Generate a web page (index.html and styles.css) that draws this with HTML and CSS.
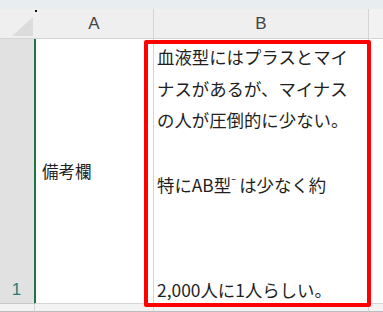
FILE: index.html
```html
<!DOCTYPE html>
<html lang="ja">
<head>
  <meta charset="UTF-8" />
  <title>備考欄</title>
  <link rel="stylesheet" href="styles.css">
</head>
<body>
  <div class="window">
    <div class="topbar"></div>

    <div class="sheet">
      <!-- header row -->
      <div class="corner"><span class="tri"></span><span class="dot"></span></div>
      <div class="col-head">A</div>
      <div class="col-head">B</div>
      <div class="col-head edge"></div>

      <!-- row 1 -->
      <div class="row-head">1</div>
      <div class="cell cell-a">備考欄</div>
      <div class="cell cell-b">
        <div class="line">血液型にはプラスとマイ</div>
        <div class="line">ナスがあるが、マイナス</div>
        <div class="line">の人が圧倒的に少ない。</div>
        <div class="line">&nbsp;</div>
        <div class="line">特にAB型<span class="minus">⁻</span>は少なく約</div>
        <div class="line last">2,000人に1人らしい。</div>
      </div>
      <div class="cell edge"></div>

      <!-- bottom strip -->
      <div class="foot"></div>
      <div class="foot"></div>
      <div class="foot"></div>
      <div class="foot edge"></div>
    </div>

    <div class="highlight"></div>
  </div>
</body>
</html>
```

FILE: styles.css
```css
:root {
  --head-bg: #efefef;
  --row-sel: #e1e1e1;
  --grid: #d4d4d4;
  --green: #217346;
  --red: #ff0000;
  --text: #1f1f1f;
}

body {
  margin: 0;
  background: #fff;
  font-family: "Noto Sans CJK JP", "Noto Sans", sans-serif;
  color: var(--text);
}

.window {
  position: relative;
  width: 383px;
  height: 312px;
  overflow: hidden;
  background: #fff;
}

.topbar {
  height: 9px;
  background: #e8edef;
}

.sheet {
  display: grid;
  grid-template-columns: 35px 119px 215px 14px;
  grid-template-rows: 30px 265px 8px;
}

.corner {
  position: relative;
  background: var(--head-bg);
  border-bottom: 1px solid var(--grid);
}

.corner .tri {
  position: absolute;
  left: 12px;
  top: 8px;
  width: 0;
  height: 0;
  border-left: 21px solid transparent;
  border-bottom: 19px solid #dcdcdc;
}

.corner .dot {
  position: absolute;
  right: -2px;
  top: 1px;
  width: 2px;
  height: 2px;
  background: #111;
}

.col-head {
  background: var(--head-bg);
  border-bottom: 1px solid var(--grid);
  border-right: 1px solid var(--grid);
  font-family: "Liberation Sans", sans-serif;
  font-size: 17px;
  color: #444;
  display: flex;
  align-items: center;
  justify-content: center;
  padding-top: 1px;
}

.col-head.edge {
  background: #f2f2f2;
  border-right: none;
}

.row-head {
  background: var(--row-sel);
  border-right: 2px solid var(--green);
  border-bottom: 1px solid #c8c8c8;
  color: #2b7a78;
  font-family: "Liberation Sans", sans-serif;
  font-size: 17px;
  display: flex;
  align-items: flex-end;
  justify-content: center;
  padding-bottom: 3px;
  padding-right: 1px;
  margin-right: -1px;
}

.cell {
  border-right: 1px solid var(--grid);
  border-bottom: 1px solid var(--grid);
}

.cell.edge {
  border-right: none;
}

.cell-a {
  display: flex;
  align-items: center;
  padding-left: 7px;
  font-size: 16.5px;
}

.cell-b {
  display: flex;
  flex-direction: column;
  padding: 2px 0 0 3px;
  font-size: 17.4px;
  white-space: nowrap;
}

.line {
  line-height: 31.5px;
}

.line.last {
  margin-top: auto;
  line-height: 26px;
}

.minus {
  display: inline-block;
  width: 8px;
  font-size: 14px;
  vertical-align: 4px;
}

.foot {
  background: #f3f3f3;
  border-right: 1px solid var(--grid);
  border-bottom: 1px solid #bdbdbd;
}

.foot.edge {
  border-right: none;
}

.highlight {
  position: absolute;
  left: 144px;
  top: 40px;
  width: 219px;
  height: 259px;
  border: 4px solid var(--red);
  border-radius: 2px;
}
```
